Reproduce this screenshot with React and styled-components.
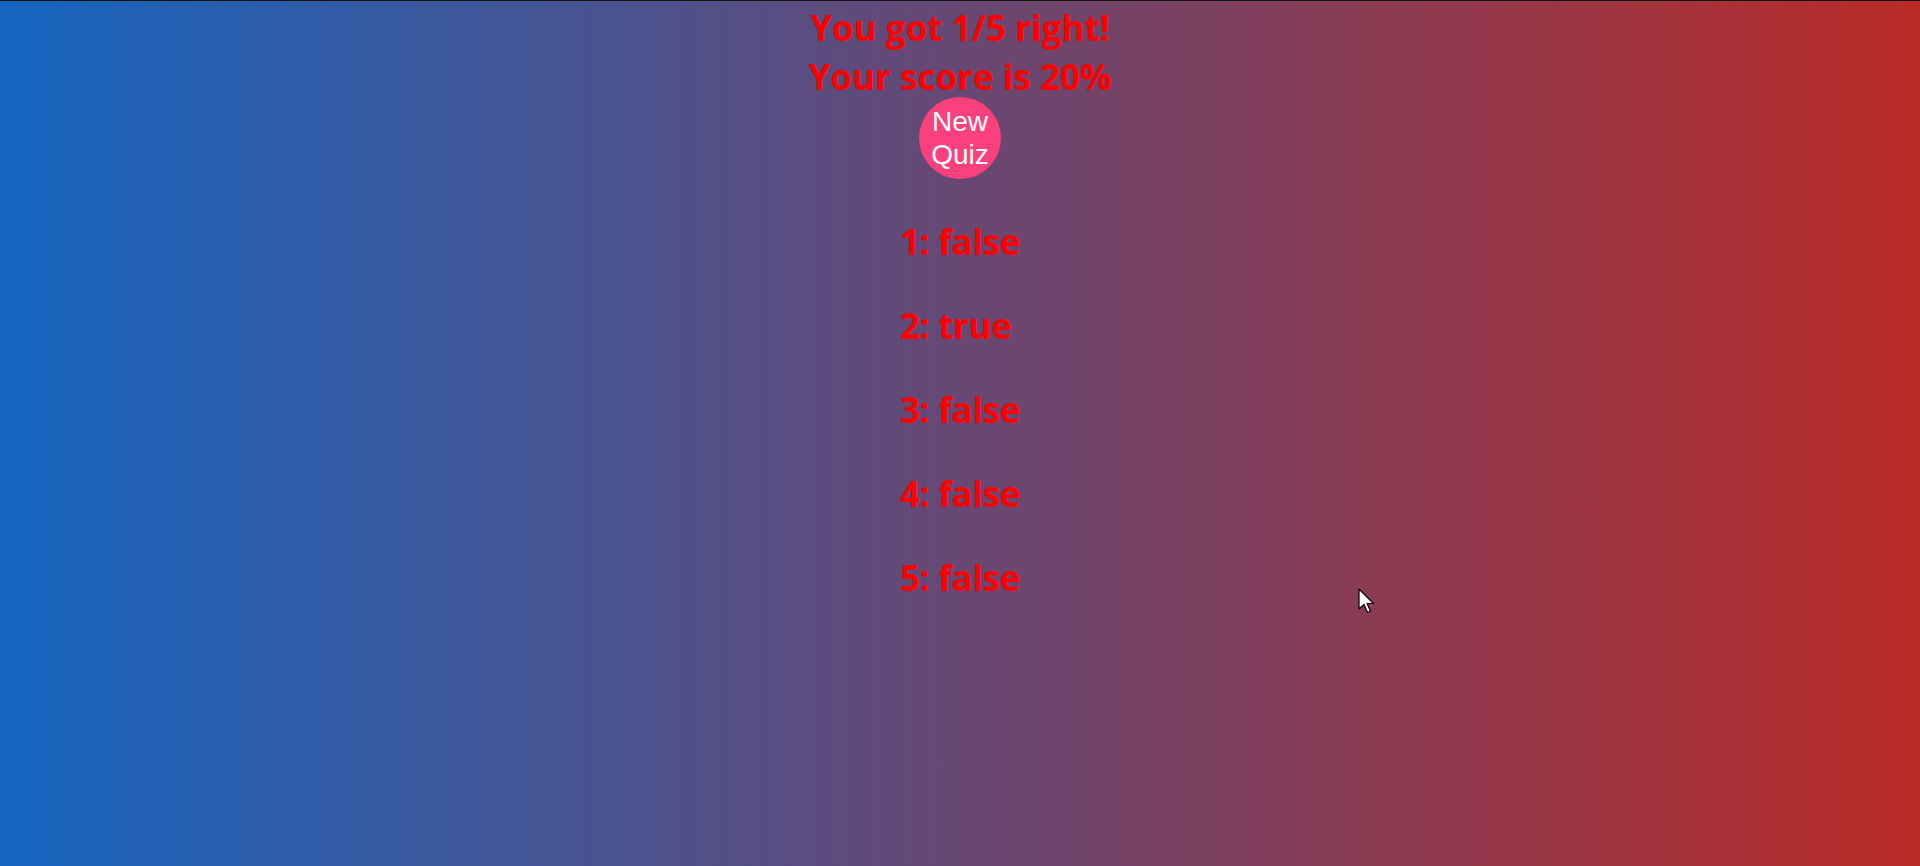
import React from "react";
import styled, { createGlobalStyle } from "styled-components";

const GlobalStyle = createGlobalStyle`
  html, body {
    margin: 0;
    padding: 0;
  }
  body {
    font-family: "Open Sans", "Noto Sans", sans-serif;
  }
`;

const answers = [false, true, false, false, false];

const S = {
  Page: styled.div`
    position: relative;
    min-height: 100vh;
    box-sizing: border-box;
    border-top: 1px solid #111;
    background: linear-gradient(to right, #1565c0, #b92b27);
    display: flex;
    flex-direction: column;
    align-items: center;
    overflow: hidden;
  `,
  Score: styled.h1`
    margin: 2px 0 0;
    color: #ff0000;
    font-size: 35px;
    font-weight: 700;
    line-height: 49px;
    text-align: center;
  `,
  NewQuiz: styled.button`
    margin-top: -4px;
    width: 82px;
    height: 82px;
    border: none;
    border-radius: 50%;
    background: #fb407e;
    color: #fff;
    font-family: "Liberation Sans", Arial, sans-serif;
    font-size: 28px;
    line-height: 33px;
    padding: 0;
    cursor: pointer;
  `,
  Results: styled.ul`
    list-style: none;
    margin: 39px 0 0;
    padding: 0;
    display: flex;
    flex-direction: column;
    align-items: flex-start;
    gap: 36px;
  `,
  Result: styled.li`
    color: #ff0000;
    font-size: 35px;
    font-weight: 700;
    line-height: 48px;
    letter-spacing: -0.3px;
  `,
  Cursor: styled.svg`
    position: absolute;
    left: 1358px;
    top: 587px;
  `,
};

const App = () => {
  const right = answers.filter(Boolean).length;
  const pct = Math.round((right / answers.length) * 100);

  return (
    <S.Page>
      <GlobalStyle />
      <S.Score>
        You got {right}/{answers.length} right!
        <br />
        Your score is {pct}%
      </S.Score>
      <S.NewQuiz>
        New
        <br />
        Quiz
      </S.NewQuiz>
      <S.Results>
        {answers.map((a, i) => (
          <S.Result key={i}>
            {i + 1}: {String(a)}
          </S.Result>
        ))}
      </S.Results>
      <S.Cursor width="18" height="28" viewBox="0 0 18 28">
        <path
          d="M1 1 L1 21 L6 16.5 L9.5 24.5 L12.5 23.2 L9 15.5 L15.5 15.5 Z"
          fill="#fff"
          stroke="#000"
          strokeWidth="1.2"
          strokeLinejoin="round"
        />
      </S.Cursor>
    </S.Page>
  );
};

export default App;
